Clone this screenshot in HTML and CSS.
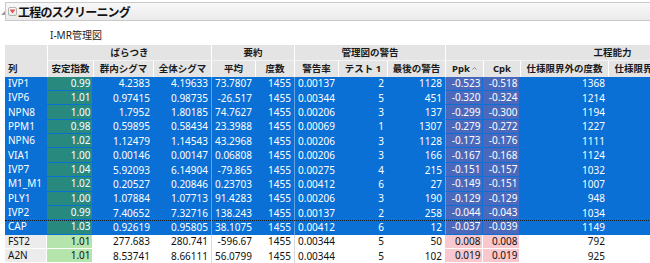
FILE: index.html
```html
<!DOCTYPE html>
<html lang="ja">
<head>
<meta charset="utf-8">
<title>工程のスクリーニング</title>
<link rel="stylesheet" href="styles.css">
</head>
<body>
<div class="report">
  <div class="outline">
    <svg class="grip" width="4" height="4" viewBox="0 0 4 4"><path d="M4 0V4H0Z" fill="#9a9a9a"/></svg>
    <div class="title-bar">
      <span class="disclose"><svg width="7" height="5" viewBox="0 0 7 5"><path d="M0.5 0.5H6.5L3.5 4.5Z" fill="#e0554f"/></svg></span>
      <span class="title">工程のスクリーニング</span>
    </div>
  </div>
  <div class="subtitle">I-MR管理図</div>

  <div class="table">
    <div class="head">
      <div class="hc name">列</div>
      <div class="hc grp g-var">ばらつき</div>
      <div class="hc grp g-sum">要約</div>
      <div class="hc grp g-warn">管理図の警告</div>
      <div class="hc grp g-cap">工程能力</div>
      <div class="hc">安定指数</div>
      <div class="hc">群内シグマ</div>
      <div class="hc">全体シグマ</div>
      <div class="hc">平均</div>
      <div class="hc">度数</div>
      <div class="hc">警告率</div>
      <div class="hc">テスト 1</div>
      <div class="hc">最後の警告</div>
      <div class="hc">Ppk<svg class="sort" width="5" height="3" viewBox="0 0 5 3"><path d="M0.5 2.5L2.5 0.5L4.5 2.5" stroke="#8a8a8a" fill="none"/></svg></div>
      <div class="hc">Cpk</div>
      <div class="hc">仕様限界外の度数</div>
      <div class="hc">仕様限界外の度数</div>
      <div class="hc"></div>
    </div>

    <div class="row sel"><span class="lbl">IVP1</span><span class="stab">0.99</span><span>4.2383</span><span>4.19633</span><span class="s">73.7807</span><span>1455</span><span class="s">0.00137</span><span>2</span><span>1128</span><span class="pk s">-0.523</span><span class="pk">-0.518</span><span>1368</span><span></span><span></span></div>
    <div class="row sel"><span class="lbl">IVP6</span><span class="stab">1.01</span><span>0.97415</span><span>0.98735</span><span class="s">-26.517</span><span>1455</span><span class="s">0.00344</span><span>5</span><span>451</span><span class="pk s">-0.320</span><span class="pk">-0.324</span><span>1214</span><span></span><span></span></div>
    <div class="row sel"><span class="lbl">NPN8</span><span class="stab">1.00</span><span>1.7952</span><span>1.80185</span><span class="s">74.7627</span><span>1455</span><span class="s">0.00206</span><span>3</span><span>137</span><span class="pk s">-0.299</span><span class="pk">-0.300</span><span>1194</span><span></span><span></span></div>
    <div class="row sel"><span class="lbl">PPM1</span><span class="stab">0.98</span><span>0.59895</span><span>0.58434</span><span class="s">23.3988</span><span>1455</span><span class="s">0.00069</span><span>1</span><span>1307</span><span class="pk s">-0.279</span><span class="pk">-0.272</span><span>1227</span><span></span><span></span></div>
    <div class="row sel"><span class="lbl">NPN6</span><span class="stab">1.02</span><span>1.12479</span><span>1.14543</span><span class="s">43.2968</span><span>1455</span><span class="s">0.00206</span><span>3</span><span>1128</span><span class="pk s">-0.173</span><span class="pk">-0.176</span><span>1111</span><span></span><span></span></div>
    <div class="row sel"><span class="lbl">VIA1</span><span class="stab">1.00</span><span>0.00146</span><span>0.00147</span><span class="s">0.06808</span><span>1455</span><span class="s">0.00206</span><span>3</span><span>166</span><span class="pk s">-0.167</span><span class="pk">-0.168</span><span>1124</span><span></span><span></span></div>
    <div class="row sel"><span class="lbl">IVP7</span><span class="stab">1.04</span><span>5.92093</span><span>6.14904</span><span class="s">-79.865</span><span>1455</span><span class="s">0.00275</span><span>4</span><span>215</span><span class="pk s">-0.151</span><span class="pk">-0.157</span><span>1032</span><span></span><span></span></div>
    <div class="row sel"><span class="lbl">M1_M1</span><span class="stab">1.02</span><span>0.20527</span><span>0.20846</span><span class="s">0.23703</span><span>1455</span><span class="s">0.00412</span><span>6</span><span>27</span><span class="pk s">-0.149</span><span class="pk">-0.151</span><span>1007</span><span></span><span></span></div>
    <div class="row sel"><span class="lbl">PLY1</span><span class="stab">1.00</span><span>1.07884</span><span>1.07713</span><span class="s">91.4283</span><span>1455</span><span class="s">0.00206</span><span>3</span><span>190</span><span class="pk s">-0.129</span><span class="pk">-0.129</span><span>948</span><span></span><span></span></div>
    <div class="row sel"><span class="lbl">IVP2</span><span class="stab">0.99</span><span>7.40652</span><span>7.32716</span><span class="s">138.243</span><span>1455</span><span class="s">0.00137</span><span>2</span><span>258</span><span class="pk s">-0.044</span><span class="pk">-0.043</span><span>1034</span><span></span><span></span></div>
    <div class="row sel focus"><span class="lbl">CAP</span><span class="stab">1.03</span><span>0.92619</span><span>0.95805</span><span class="s">38.1075</span><span>1455</span><span class="s">0.00412</span><span>6</span><span>12</span><span class="pk s">-0.037</span><span class="pk">-0.039</span><span>1149</span><span></span><span></span></div>
    <div class="row"><span class="lbl">FST2</span><span class="stab">1.01</span><span>277.683</span><span>280.741</span><span class="s">-596.67</span><span>1455</span><span class="s">0.00344</span><span>5</span><span>50</span><span class="pk s">0.008</span><span class="pk">0.008</span><span>792</span><span></span><span></span></div>
    <div class="row"><span class="lbl">A2N</span><span class="stab">1.01</span><span>8.53741</span><span>8.66111</span><span class="s">56.0799</span><span>1455</span><span class="s">0.00344</span><span>5</span><span>102</span><span class="pk s">0.019</span><span class="pk">0.019</span><span>925</span><span></span><span></span></div>
  </div>
</div>
</body>
</html>
```
FILE: styles.css
```css
* { box-sizing: border-box; margin: 0; padding: 0; }

html, body {
  width: 650px;
  height: 263px;
  overflow: hidden;
  background: #ffffff;
}

body {
  font-family: "Noto Sans", "Noto Sans CJK JP", sans-serif;
  color: #111111;
}

.report {
  width: 650px;
  overflow: hidden;
  --cols: 42px 46px 60px 58px 44px 39px 44px 49px 58px 38px 37px 88px 88px 83px;
}

/* ---------- outline title ---------- */
.outline {
  display: flex;
  align-items: flex-start;
  padding-top: 2px;
}

.grip {
  flex: none;
  margin: 9px 0 0 1px;
}

.title-bar {
  flex: 1;
  height: 19px;
  display: flex;
  align-items: center;
  gap: 1px;
  padding-left: 2px;
  border: 1px solid #c9c9c9;
  border-right: none;
  background: linear-gradient(#f8f8f8, #eaeaea);
}

.disclose {
  width: 9px;
  height: 9px;
  display: flex;
  align-items: center;
  justify-content: center;
  border: 1px solid #b3b3b3;
  border-radius: 2px;
  background: linear-gradient(#ffffff, #e8e8e8);
}

.title {
  font-family: "Noto Sans CJK JP", sans-serif;
  font-weight: 700;
  font-size: 12px;
  line-height: 1;
  letter-spacing: -0.8px;
  color: #111;
}

.subtitle {
  font-family: "Noto Sans", "Noto Sans CJK JP", sans-serif;
  font-size: 10px;
  line-height: 12px;
  padding: 8px 0 4px 50px;
  color: #222;
}

/* ---------- table ---------- */
.table {
  margin-left: 5px;
  width: 774px;
}

.head {
  display: grid;
  grid-template-columns: var(--cols);
  grid-template-rows: 15.5px 16.2px;
}

.hc {
  background: #e4e4e4;
  border-left: 1px solid #ffffff;
  font-family: "Noto Sans", "Noto Sans CJK JP", sans-serif;
  font-weight: 700;
  font-size: 9.5px;
  line-height: 1;
  color: #1a1a1a;
  display: flex;
  align-items: center;
  justify-content: center;
  white-space: nowrap;
  overflow: hidden;
}

.hc.name {
  grid-row: 1 / span 2;
  border-left: none;
  justify-content: flex-start;
  padding: 15.5px 0 0 3px;
}

.hc.grp { border-bottom: 1px solid #f3f3f3; }
.g-var  { grid-column: 2 / span 3; }
.g-sum  { grid-column: 5 / span 2; }
.g-warn { grid-column: 7 / span 3; }
.g-cap  { grid-column: 10 / span 5; }

.sort { margin-left: 2px; }

.row {
  --sep: #dadada;
  --g: #b6e4ad;
  --p: #f8c8ce;
  --lbl: #ececec;
  display: grid;
  grid-template-columns: var(--cols);
  height: 14.37px;
  background: #ffffff;
  font-size: 10px;
  line-height: 13px;
  color: #111;
}

.row.sel {
  --sep: #62a1e4;
  --g: #288a7f;
  --p: #4a69bc;
  --lbl: transparent;
  background: #0a70d6;
  color: #ffffff;
}

.row > span {
  display: flex;
  align-items: center;
  justify-content: flex-end;
  padding-right: 3px;
  white-space: nowrap;
  overflow: hidden;
}

.row > .lbl {
  justify-content: flex-start;
  padding: 0 0 0 3px;
  background: var(--lbl) padding-box;
  border-bottom: 1px solid transparent;
  border-right: 1px solid transparent;
}

.row > .s { border-left: 1px solid var(--sep); }

.row > .stab,
.row > .pk {
  border-right: 1px solid transparent;
  border-bottom: 1px solid transparent;
  padding-right: 1.5px;
}

.row > .stab { background: var(--g) padding-box; }
.row > .pk   { background: var(--p) padding-box; }

.row.focus { position: relative; }
.row.focus::before {
  content: "";
  position: absolute;
  left: 0;
  right: 0;
  top: 0;
  border-top: 1px dotted #1a1a1a;
}
```
